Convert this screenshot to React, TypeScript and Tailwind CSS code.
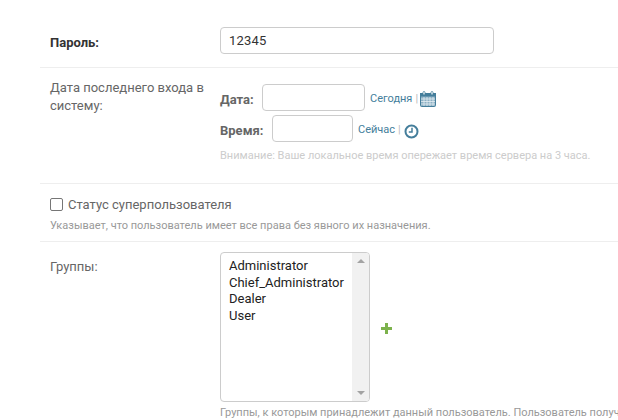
export default function App() {
  return (
    <div className="w-[618px] h-[420px] overflow-hidden bg-white font-['Roboto',sans-serif] text-[13px] text-[#666] pl-10">
      {/* Password */}
      <div className="flex h-[68px] border-b border-[#eee] pl-2.5 pt-[27px]">
        <label className="w-[170px] font-bold text-[#333] leading-[18px] pt-[7px]">Пароль:</label>
        <div className="w-[274px] h-[27px] border border-[#ccc] rounded pl-2 text-[13px] text-[#333] leading-[25px] tracking-[0.2px]">12345</div>
      </div>

      {/* Last login */}
      <div className="flex h-[116px] border-b border-[#eee] pl-2.5 pt-[11px]">
        <label className="w-[170px] leading-[18px] pr-2 pt-0">Дата последнего входа в систему:</label>
        <div className="flex flex-col pt-[5px]">
          <div className="flex items-center h-[27px]">
            <span className="font-bold w-[42px] pt-[4px]">Дата:</span>
            <div className="w-[103px] h-[27px] border border-[#ccc] rounded" />
            <span className="ml-[5px] pt-[4px] text-[11px] text-[#447e9b]">Сегодня</span>
            <span className="ml-[3px] pt-[4px] text-[11px] text-[#bbb]">|</span>
            <svg className="ml-[2px] mt-[3px]" width="16" height="16" viewBox="0 0 16 16" fill="none">
              <rect x="0.5" y="2.5" width="15" height="13" rx="1" fill="#8cb0c4" stroke="#447e9b" />
              <rect x="0" y="2" width="16" height="3.5" fill="#447e9b" />
              <path d="M1 8h14M1 10.5h14M1 13h14M4 6v9M7 6v9M10 6v9M13 6v9" stroke="#e4eef3" strokeWidth="0.8" />
              <rect x="3" y="0.5" width="2" height="3.5" rx="1" fill="#fff" stroke="#447e9b" strokeWidth="0.8" />
              <rect x="11" y="0.5" width="2" height="3.5" rx="1" fill="#fff" stroke="#447e9b" strokeWidth="0.8" />
            </svg>
          </div>
          <div className="flex items-center h-[27px] mt-1">
            <span className="font-bold w-[52px] pt-[4px]">Время:</span>
            <div className="w-[81px] h-[27px] border border-[#ccc] rounded" />
            <span className="ml-[5px] pt-[4px] text-[11px] text-[#447e9b]">Сейчас</span>
            <span className="ml-[3px] pt-[4px] text-[11px] text-[#bbb]">|</span>
            <svg className="ml-[3px] mt-[5px]" width="15" height="15" viewBox="0 0 15 15" fill="none">
              <circle cx="7.5" cy="7.5" r="6" stroke="#447e9b" strokeWidth="2" />
              <path d="M8 3.8V8H4.8" stroke="#447e9b" strokeWidth="1.5" />
            </svg>
          </div>
          <p className="mt-[6px] text-[11px] leading-[16px] text-[#ccc] whitespace-nowrap">
            Внимание: Ваше локальное время опережает время сервера на 3 часа.
          </p>
        </div>
      </div>

      {/* Superuser */}
      <div className="h-[58px] border-b border-[#eee] pl-2.5 pt-[13px]">
        <div className="flex items-center h-[14px]">
          <span className="w-[13px] h-[13px] border border-[#767676] rounded-[2px] bg-white" />
          <span className="ml-[5px] pt-[2px] leading-[14px]">Статус суперпользователя</span>
        </div>
        <p className="mt-[7px] text-[11px] leading-[16px] text-[#999] whitespace-nowrap">
          Указывает, что пользователь имеет все права без явного их назначения.
        </p>
      </div>

      {/* Groups */}
      <div className="flex pl-2.5 pt-[10px]">
        <label className="w-[170px] leading-[18px] pt-[6px]">Группы:</label>
        <div className="flex-1 min-w-0">
          <div className="flex items-center">
            <div className="flex w-[150px] h-[150px] border border-[#ccc] rounded overflow-hidden">
              <div className="flex-1 pl-2 pt-[5px] text-[13px] leading-[16.7px] text-[#222]">
                <div>Administrator</div>
                <div className="whitespace-nowrap">Chief_Administrator</div>
                <div>Dealer</div>
                <div>User</div>
              </div>
              <div className="flex flex-col justify-between items-center w-[17px] bg-[#f1f1f1] py-[6px]">
                <span className="w-0 h-0 border-x-[4px] border-x-transparent border-b-[4px] border-b-[#a3a3a3]" />
                <span className="w-0 h-0 border-x-[4px] border-x-transparent border-t-[4px] border-t-[#a3a3a3]" />
              </div>
            </div>
            <svg className="ml-[11px] mt-[2px]" width="11" height="11" viewBox="0 0 11 11">
              <path d="M4 0h3v4h4v3H7v4H4V7H0V4h4z" fill="#7cb24c" />
            </svg>
          </div>
          <p className="mt-[3px] text-[11px] leading-[16px] text-[#999] whitespace-nowrap">
            Группы, к которым принадлежит данный пользователь. Пользователь получит все права, указанные в каждой из его групп.
          </p>
        </div>
      </div>
    </div>
  );
}
